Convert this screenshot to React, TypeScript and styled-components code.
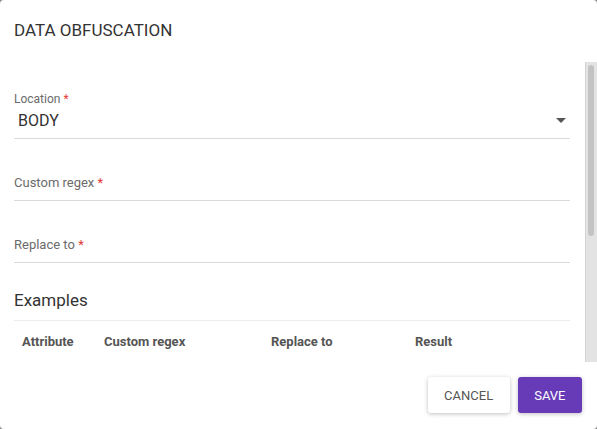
import React from "react";
import styled, { createGlobalStyle } from "styled-components";

const GlobalStyle = createGlobalStyle`
  html, body {
    margin: 0;
    padding: 0;
    background: #8a8a8a;
    font-family: Roboto, "Liberation Sans", Arial, sans-serif;
  }
`;

const App = () => {
  return (
    <>
      <GlobalStyle />
      <SDialog>
        <STitle>DATA OBFUSCATION</STitle>
        <SBody>
          <SContent>
            <SField>
              <SLabel>
                Location <SStar>*</SStar>
              </SLabel>
              <SSelect>
                <span>BODY</span>
                <svg width="10" height="5" viewBox="0 0 10 5">
                  <path d="M0 0 L10 0 L5 5 Z" fill="#555" />
                </svg>
              </SSelect>
            </SField>
            <SField $top={22}>
              <SPlaceholder>
                Custom regex <SStar>*</SStar>
              </SPlaceholder>
            </SField>
            <SField $top={22}>
              <SPlaceholder>
                Replace to <SStar>*</SStar>
              </SPlaceholder>
            </SField>
            <SSectionTitle>Examples</SSectionTitle>
            <STable>
              <thead>
                <tr>
                  <SHeadCell>Attribute</SHeadCell>
                  <SHeadCell>Custom regex</SHeadCell>
                  <SHeadCell>Replace to</SHeadCell>
                  <SHeadCell>Result</SHeadCell>
                </tr>
              </thead>
            </STable>
          </SContent>
          <SScrollTrack>
            <SScrollThumb />
          </SScrollTrack>
        </SBody>
        <SActions>
          <SButton>Cancel</SButton>
          <SButton $primary>Save</SButton>
        </SActions>
      </SDialog>
    </>
  );
};

const SDialog = styled.div`
  width: 597px;
  height: 429px;
  background: #ffffff;
  border-radius: 4px;
  display: flex;
  flex-direction: column;
  overflow: hidden;
`;

const STitle = styled.h2`
  margin: 0;
  padding: 20px 14px 0;
  height: 42px;
  box-sizing: border-box;
  font-size: 17px;
  font-weight: 400;
  color: #333333;
  line-height: 20px;
`;

const SBody = styled.div`
  display: flex;
  height: 300px;
  margin-top: 20px;
`;

const SContent = styled.div`
  flex: 1;
  overflow: hidden;
  padding: 30px 15px 0 14px;
`;

const SScrollTrack = styled.div`
  width: 12px;
  box-sizing: border-box;
  background: #e3e3e3;
  border-left: 1px solid #d4d4d4;
  padding: 3px 3px 0 2px;
`;

const SScrollThumb = styled.div`
  height: 171px;
  background: #c3c3c3;
  border-radius: 3px;
`;

const SField = styled.div<{ $top?: number }>`
  margin-top: ${(p) => p.$top ?? 0}px;
  border-bottom: 1px solid #d9d9d9;
  display: flex;
  flex-direction: column;
`;

const SLabel = styled.label`
  font-size: 12px;
  color: #6b6b6b;
  line-height: 14px;
`;

const SStar = styled.span`
  color: #e53935;
`;

const SSelect = styled.div`
  display: flex;
  align-items: center;
  justify-content: space-between;
  padding: 5px 4px 8px 4px;
  font-size: 16px;
  color: #333333;
  line-height: 19px;
`;

const SPlaceholder = styled.label`
  font-size: 13px;
  color: #6b6b6b;
  line-height: 16px;
  padding: 14px 0 9px;
`;

const SSectionTitle = styled.h3`
  margin: 27px 0 0;
  font-size: 17px;
  font-weight: 400;
  color: #333333;
  line-height: 20px;
  padding-bottom: 10px;
  border-bottom: 1px solid #ececec;
`;

const STable = styled.table`
  width: 100%;
  border-collapse: collapse;
`;

const SHeadCell = styled.th`
  text-align: left;
  font-size: 13px;
  font-weight: 700;
  color: #555555;
  padding: 13px 8px;
  &:nth-child(1) {
    width: 66px;
  }
  &:nth-child(2) {
    width: 151px;
  }
  &:nth-child(3) {
    width: 128px;
  }
`;

const SActions = styled.div`
  display: flex;
  justify-content: flex-end;
  gap: 8px;
  padding: 15px 15px 0 0;
`;

const SButton = styled.button<{ $primary?: boolean }>`
  height: 36px;
  padding: 0 16.5px;
  border: none;
  border-radius: 3px;
  font-family: Roboto, "Liberation Sans", Arial, sans-serif;
  font-size: 13px;
  text-transform: uppercase;
  cursor: pointer;
  background: ${(p) => (p.$primary ? "#673ab7" : "#ffffff")};
  color: ${(p) => (p.$primary ? "#ffffff" : "#555555")};
  box-shadow: 0 1px 4px rgba(0, 0, 0, 0.25);
`;

export default App;
